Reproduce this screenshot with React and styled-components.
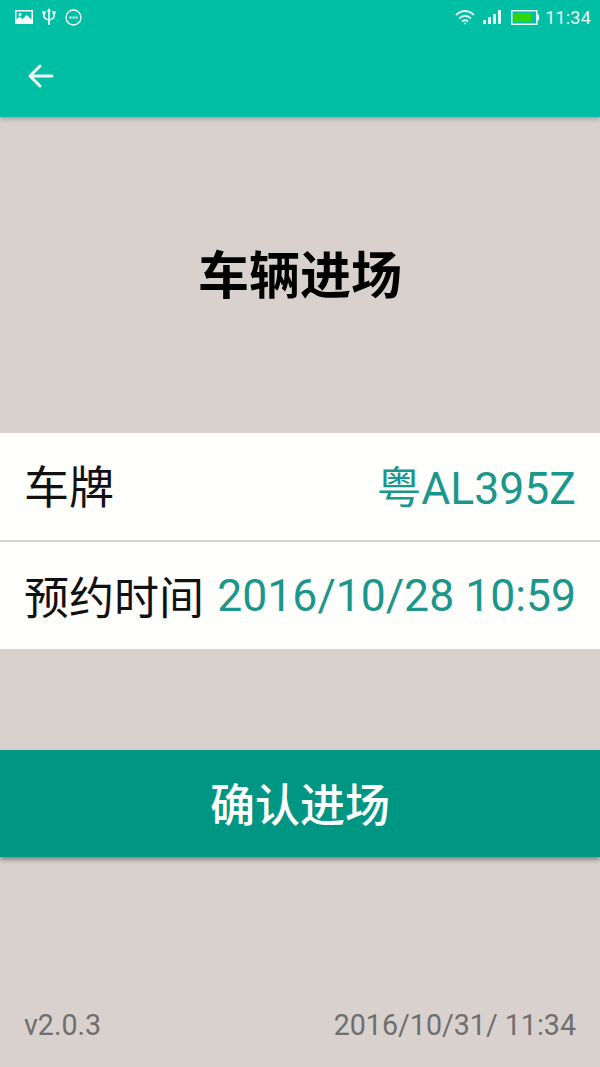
import styled, { createGlobalStyle } from "styled-components";

const GlobalStyle = createGlobalStyle`
    html, body {
        margin: 0;
        padding: 0;
    }
    body {
        font-family: Roboto, "Noto Sans CJK SC", sans-serif;
    }
`;

const Page = styled.div`
    display: flex;
    flex-direction: column;
    width: 600px;
    height: 1067px;
    overflow: hidden;
    background: #d9d1ce;
`;

const Header = styled.header`
    height: 117px;
    flex: none;
    background: #00bfa5;
    box-shadow: 0 2px 4px rgba(0, 0, 0, 0.25);
    position: relative;
`;

const StatusBar = styled.div`
    display: flex;
    justify-content: space-between;
    align-items: center;
    height: 34px;
    padding: 0 9px 0 15px;
    color: #fff;
`;

const StatusGroup = styled.div`
    display: flex;
    align-items: center;
    gap: ${(p) => p.$gap}px;
`;

const Clock = styled.span`
    margin-left: -2px;
    font-size: 18px;
    color: #e6f8f5;
    letter-spacing: 0.2px;
`;

const ActionBar = styled.div`
    display: flex;
    align-items: center;
    height: 84px;
    padding-left: 28px;
`;

const Title = styled.h1`
    margin: 0;
    height: 316px;
    flex: none;
    display: flex;
    align-items: center;
    justify-content: center;
    padding-bottom: 6px;
    box-sizing: border-box;
    font-size: 51px;
    font-weight: 700;
    color: #000;
`;

const InfoList = styled.div`
    background: #fefefc;
    flex: none;
`;

const InfoRow = styled.div`
    display: flex;
    justify-content: space-between;
    align-items: center;
    box-sizing: content-box;
    height: 103px;
    padding: 0 24px 4px;
    & + & {
        height: 107px;
        padding-bottom: 0;
        border-top: 2px solid #d6d4d2;
    }
`;

const Label = styled.span`
    font-size: 45px;
    color: #111;
`;

const Value = styled.span`
    font-size: 44.5px;
    color: #1a978a;
    white-space: nowrap;
`;

const ConfirmButton = styled.button`
    display: block;
    flex: none;
    box-sizing: border-box;
    width: 100%;
    height: 107px;
    margin-top: 101px;
    padding: 0 0 2px;
    border: 0;
    background: #009684;
    box-shadow: 0 3px 4px rgba(0, 0, 0, 0.35);
    color: #fff;
    font-family: inherit;
    font-size: 45px;
    font-weight: 500;
`;

const Footer = styled.div`
    margin-top: auto;
    display: flex;
    justify-content: space-between;
    align-items: center;
    height: 85px;
    padding: 0 24px;
    font-size: 28.6px;
    color: #6f6f6f;
`;

function StatusIcons() {
    return (
        <StatusGroup $gap={9}>
            <svg width="18" height="16" viewBox="0 0 18 16">
                <path fill="#fff" fillRule="evenodd" d="M0 1h18v14H0zM1.5 2.5v8l3-3 3 2.5 4-4 5 4.5v-8z" />
                <circle cx="5" cy="5.5" r="1.5" fill="#fff" />
            </svg>
            <svg width="14" height="18" viewBox="0 0 14 18" fill="none" stroke="#fff" strokeWidth="1.6">
                <path d="M7 3v14M2 5v3q0 3 5 4 5-1 5-4V5" />
                <path fill="#fff" stroke="none" d="M7 0l2.2 3.5H4.8zM.5 3h3v3h-3zM10.5 3h3v3h-3z" />
            </svg>
            <svg width="17" height="17" viewBox="0 0 17 17" fill="none" stroke="#fff" strokeWidth="1.3">
                <circle cx="8.5" cy="8.5" r="7.5" />
                <path stroke="none" fill="#fff" d="M4.5 7.5h2v2h-2zM7.5 7.5h2v2h-2zM10.5 7.5h2v2h-2z" />
            </svg>
        </StatusGroup>
    );
}

function SystemIcons() {
    return (
        <StatusGroup $gap={8}>
            <svg width="20" height="16" viewBox="0 0 23 16" preserveAspectRatio="none" fill="none" stroke="#dff6f2" strokeWidth="1.8">
                <path d="M1 6q10.500-8 21 0M4.500 9.500q7-5.500 14 0M8 12.500q3.500-2.500 7 0" />
                <circle cx="11.500" cy="14.500" r="1" fill="#dff6f2" stroke="none" />
            </svg>
            <svg width="19" height="14" viewBox="0 0 19 14" fill="#dff6f2">
                <path d="M0 10h3v4H0zM5 7h3v7H5zM10 4h3v10h-3zM15 0h3v14h-3z" />
            </svg>
            <svg width="29" height="15" viewBox="0 0 29 15">
                <path fill="none" stroke="#e6f8f5" strokeWidth="1.500" d="M1.800.8h25v13.400h-25z" />
                <path fill="#e6f8f5" d="M27 4.500h2v6h-2z" />
                <path fill="#2fd60c" d="M4 3h17v9H4z" />
            </svg>
            <Clock>11:34</Clock>
        </StatusGroup>
    );
}

export default function App() {
    return (
        <Page>
            <GlobalStyle />
            <Header>
                <StatusBar>
                    <StatusIcons />
                    <SystemIcons />
                </StatusBar>
                <ActionBar>
                    <svg width="26" height="24" viewBox="0 0 26 24" fill="none" stroke="#f2fbfa" strokeWidth="3" strokeLinecap="round" strokeLinejoin="round">
                        <path d="M24 12H2M12 2L2 12l10 10" />
                    </svg>
                </ActionBar>
            </Header>
            <Title>车辆进场</Title>
            <InfoList>
                <InfoRow>
                    <Label>车牌</Label>
                    <Value>粤AL395Z</Value>
                </InfoRow>
                <InfoRow>
                    <Label>预约时间</Label>
                    <Value>2016/10/28 10:59</Value>
                </InfoRow>
            </InfoList>
            <ConfirmButton>确认进场</ConfirmButton>
            <Footer>
                <span>v2.0.3</span>
                <span>2016/10/31/ 11:34</span>
            </Footer>
        </Page>
    );
}
